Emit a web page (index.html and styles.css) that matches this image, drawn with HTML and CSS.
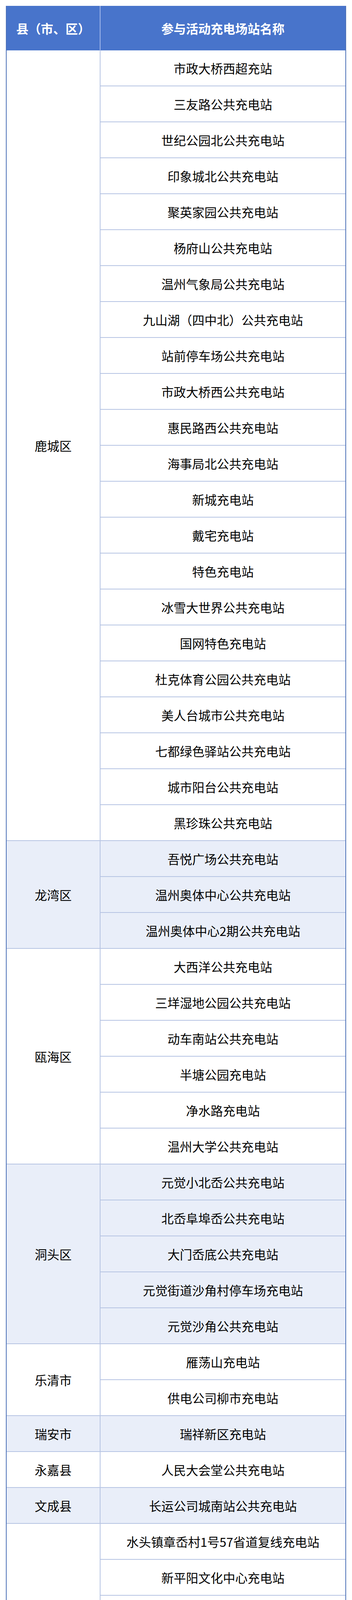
FILE: index.html
```html
<!DOCTYPE html>
<html lang="zh-CN">
<head>
<meta charset="utf-8">
<title>参与活动充电场站名称</title>
<link rel="stylesheet" href="styles.css">
</head>
<body>
<div class="sheet">
  <div class="head">
    <div class="hcell">县（市、区）</div>
    <div class="hcell">参与活动充电场站名称</div>
  </div>
  <div class="body">
    <div class="district" style="grid-row: span 22">鹿城区</div>
    <div class="station">市政大桥西超充站</div>
    <div class="station">三友路公共充电站</div>
    <div class="station">世纪公园北公共充电站</div>
    <div class="station">印象城北公共充电站</div>
    <div class="station">聚英家园公共充电站</div>
    <div class="station">杨府山公共充电站</div>
    <div class="station">温州气象局公共充电站</div>
    <div class="station">九山湖（四中北）公共充电站</div>
    <div class="station">站前停车场公共充电站</div>
    <div class="station">市政大桥西公共充电站</div>
    <div class="station">惠民路西公共充电站</div>
    <div class="station">海事局北公共充电站</div>
    <div class="station">新城充电站</div>
    <div class="station">戴宅充电站</div>
    <div class="station">特色充电站</div>
    <div class="station">冰雪大世界公共充电站</div>
    <div class="station">国网特色充电站</div>
    <div class="station">杜克体育公园公共充电站</div>
    <div class="station">美人台城市公共充电站</div>
    <div class="station">七都绿色驿站公共充电站</div>
    <div class="station">城市阳台公共充电站</div>
    <div class="station">黑珍珠公共充电站</div>

    <div class="district alt" style="grid-row: span 3">龙湾区</div>
    <div class="station alt">吾悦广场公共充电站</div>
    <div class="station alt">温州奥体中心公共充电站</div>
    <div class="station alt">温州奥体中心2期公共充电站</div>

    <div class="district" style="grid-row: span 6">瓯海区</div>
    <div class="station">大西洋公共充电站</div>
    <div class="station">三垟湿地公园公共充电站</div>
    <div class="station">动车南站公共充电站</div>
    <div class="station">半塘公园充电站</div>
    <div class="station">净水路充电站</div>
    <div class="station">温州大学公共充电站</div>

    <div class="district alt" style="grid-row: span 5">洞头区</div>
    <div class="station alt">元觉小北岙公共充电站</div>
    <div class="station alt">北岙阜埠岙公共充电站</div>
    <div class="station alt">大门岙底公共充电站</div>
    <div class="station alt">元觉街道沙角村停车场充电站</div>
    <div class="station alt">元觉沙角公共充电站</div>

    <div class="district" style="grid-row: span 2">乐清市</div>
    <div class="station">雁荡山充电站</div>
    <div class="station">供电公司柳市充电站</div>

    <div class="district alt">瑞安市</div>
    <div class="station alt">瑞祥新区充电站</div>

    <div class="district">永嘉县</div>
    <div class="station">人民大会堂公共充电站</div>

    <div class="district alt">文成县</div>
    <div class="station alt">长运公司城南站公共充电站</div>

    <div class="district" style="grid-row: span 6">平阳县</div>
    <div class="station">水头镇章岙村1号57省道复线充电站</div>
    <div class="station">新平阳文化中心充电站</div>
    <div class="station">万全镇体育活动中心内停车场充电站</div>
    <div class="station">鸽巢路电力调度大楼充电站</div>
    <div class="station">沈海高速萧江服务所充电站</div>
    <div class="station">水头章岙村57省道公共充电站</div>

    <div class="district alt" style="grid-row: span 2">泰顺县</div>
    <div class="station alt">氡泉小镇公共充电站</div>
    <div class="station alt">亿联开元名都酒店停车场充电站</div>

    <div class="district">苍南县</div>
    <div class="station">宜山文化广场充电站</div>
  </div>
</div>
</body>
</html>
```

FILE: styles.css
```css
html, body {
  margin: 0;
  padding: 0;
  background: #ffffff;
}

body {
  font-family: "Noto Sans CJK SC", "Noto Sans", sans-serif;
  color: #000000;
}

.sheet {
  margin: 15px;
  border: 2px solid #4e72b8;
  border-top: none;
  width: 866px;
}

.head {
  display: grid;
  grid-template-columns: 238px 626px;
  column-gap: 2px;
  background: #a3b9ea;
  height: 114px;
}

.hcell {
  background: #4874cb;
  color: #ffffff;
  font-weight: 700;
  font-size: 31.5px;
  display: flex;
  align-items: center;
  justify-content: center;
}

.body {
  display: grid;
  grid-template-columns: 238px 626px;
  grid-auto-rows: 90px;
  gap: 2px;
  background: #b6c4e3;
}

.district,
.station {
  background: #ffffff;
  font-size: 31.5px;
  display: flex;
  align-items: center;
  justify-content: center;
  text-align: center;
  white-space: nowrap;
}

.district {
  grid-column: 1;
}

.station {
  grid-column: 2;
}

.alt {
  background: #e9eef9;
}
```
